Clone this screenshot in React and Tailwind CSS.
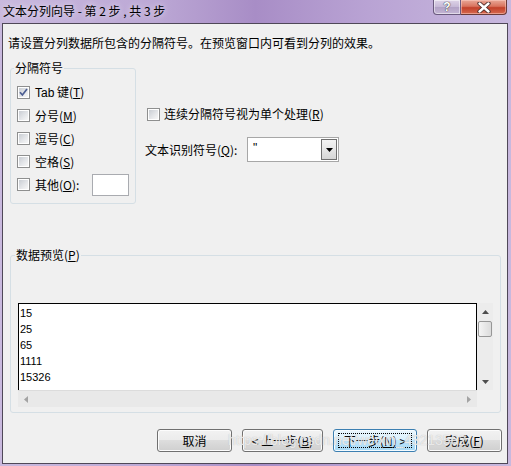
import React from "react";

const lines = ["15", "25", "65", "1111", "15326"];

function Check({ checked }) {
  return (
    <span className="flex h-[13px] w-[13px] shrink-0 items-center justify-center border border-[#8e8f8f] bg-white">
      <span className="flex h-[9px] w-[9px] items-center justify-center bg-[linear-gradient(135deg,#c9cdd3_0%,#e4e6e9_55%,#f7f7f7_100%)]">
        {checked && (
          <svg width="9" height="9" viewBox="0 0 9 9">
            <path d="M1 4.2 L3.4 7 L8 1" fill="none" stroke="#4b5d92" strokeWidth="1.7" />
          </svg>
        )}
      </span>
    </span>
  );
}

function Row({ checked, children, extra }) {
  return (
    <div className="flex h-[23px] items-center">
      <Check checked={checked} />
      <span className="ml-[5px] leading-[14px]">{children}</span>
      {extra}
    </div>
  );
}

function Btn({ children, className, focus }) {
  return (
    <button
      className={
        "flex h-[23px] items-center justify-center rounded-[3px] border text-[12px] leading-[14px] text-black " +
        (focus
          ? "border-[#3c7fb1] bg-[linear-gradient(#eaf6fd_0%,#d9f0fc_50%,#bee6fd_50%,#a7d9f5_100%)] shadow-[inset_0_0_0_1px_#f4fbff] "
          : "border-[#707070] bg-[linear-gradient(#f2f2f2_0%,#ebebeb_50%,#dddddd_50%,#cfcfcf_100%)] shadow-[inset_0_0_0_1px_#fcfcfc] ") +
        className
      }
    >
      {focus ? (
        <span className="flex h-[15px] w-[calc(100%-8px)] items-center justify-center border border-dotted border-black">
          {children}
        </span>
      ) : (
        children
      )}
    </button>
  );
}

function Tri({ dir, color }) {
  const pts = {
    up: "3.5,0 7,4 0,4",
    down: "0,0 7,0 3.5,4",
    left: "4,0 4,7 0,3.5",
    right: "0,0 4,3.5 0,7",
  }[dir];
  const vert = dir === "up" || dir === "down";
  return (
    <svg width={vert ? 7 : 4} height={vert ? 4 : 7} viewBox={vert ? "0 0 7 4" : "0 0 4 7"}>
      <polygon points={pts} fill={color} />
    </svg>
  );
}

export default function App() {
  return (
    <div className="relative flex h-[466px] w-[511px] flex-col overflow-hidden bg-[linear-gradient(90deg,#c9b9de_0%,#bca8d5_30%,#a88dc6_50%,#b9a3d4_72%,#c8b8de_100%)] font-['Noto_Sans_CJK_SC',sans-serif] text-[12px] text-black">
      {/* title bar */}
      <div className="flex h-[23px] shrink-0 items-start justify-between">
        <span className="pl-[3px] pt-[4px] leading-[14px] [text-shadow:0_0_6px_rgba(255,255,255,0.8)]">
          文本分列向导 - 第 2 步 , 共 3 步
        </span>
        <div className="mr-[4px] flex">
          <div className="flex h-[15px] w-[28px] items-center justify-center rounded-bl-[4px] border border-t-0 border-[#6a5a7e] bg-[linear-gradient(#ded4e8_0%,#c6b8d6_50%,#b2a2c6_52%,#c3b5d4_100%)] shadow-[inset_0_0_0_1px_rgba(255,255,255,0.5)]">
            <span className="font-['Liberation_Sans',sans-serif] text-[12px] font-bold leading-[12px] text-white [text-shadow:0_0_1px_#333,0_0_1px_#333]">
              ?
            </span>
          </div>
          <div className="flex h-[15px] w-[46px] items-center justify-center rounded-br-[4px] border border-l-0 border-t-0 border-[#6a3a38] bg-[linear-gradient(#e9a898_0%,#d9735e_45%,#c2402a_55%,#d66a4f_100%)] shadow-[inset_0_0_0_1px_rgba(255,210,200,0.5)]">
            <svg width="14" height="11" viewBox="0 0 14 11">
              <path d="M2.5 1.5 L11.5 9.5 M11.5 1.5 L2.5 9.5" stroke="#4a2a28" strokeWidth="4.2" strokeLinecap="round" />
              <path d="M2.5 1.5 L11.5 9.5 M11.5 1.5 L2.5 9.5" stroke="#ffffff" strokeWidth="2.4" strokeLinecap="round" />
            </svg>
          </div>
        </div>
      </div>

      {/* client area */}
      <div className="mb-[2px] ml-[2px] mr-[3px] flex flex-1 flex-col border border-[#4f4858] bg-[#f0f0f0]">
        <p className="mt-[12px] pl-[5px] leading-[14px]">
          请设置分列数据所包含的分隔符号。在预览窗口内可看到分列的效果。
        </p>

        <div className="mt-[11px] flex">
          <fieldset className="ml-[7px] w-[126px] rounded-[3px] border border-[#d5dfe5] px-[6px] pb-[7px] pt-[6px]">
            <legend className="-ml-[3px] px-[1px] leading-[14px]">分隔符号</legend>
            <Row checked>
              <span className="font-['Liberation_Sans',sans-serif]">Tab</span> 键(<u>T</u>)
            </Row>
            <Row>分号(<u>M</u>)</Row>
            <Row>逗号(<u>C</u>)</Row>
            <Row>空格(<u>S</u>)</Row>
            <Row extra={<span className="ml-auto h-[22px] w-[37px] border border-[#a9abb0] bg-white" />}>
              其他(<u>O</u>):
            </Row>
          </fieldset>

          <div className="ml-[11px] flex flex-col">
            <div className="mt-[46px] flex h-[14px] items-center">
              <Check />
              <span className="ml-[4px] leading-[14px]">连续分隔符号视为单个处理(<u>R</u>)</span>
            </div>
            <div className="-ml-[2px] mt-[16px] flex items-center">
              <span className="w-[102px] leading-[14px]">文本识别符号(<u>Q</u>):</span>
              <div className="flex h-[25px] w-[92px] border border-[#a7a7a7] bg-white p-[1px]">
                <span className="flex-1 pl-[4px] pt-[2px] font-['Liberation_Sans',sans-serif] text-[12px] leading-[14px]">
                  "
                </span>
                <span className="flex w-[16px] items-center justify-center border border-[#707070] bg-[linear-gradient(#f3f3f3_0%,#e6e6e6_50%,#d6d6d6_100%)]">
                  <Tri dir="down" color="#000000" />
                </span>
              </div>
            </div>
          </div>
        </div>

        <fieldset className="ml-[7px] mt-[44px] w-[491px] rounded-[3px] border border-[#d5dfe5] px-[7px] pb-[5px] pt-[41px]">
          <legend className="-ml-[3px] px-[1px] leading-[14px]">数据预览(<u>P</u>)</legend>
          <div className="flex flex-col">
            <div className="flex h-[87px]">
              <div className="flex-1 border-x border-t border-black bg-white pl-[1px] pt-[1px] font-['Liberation_Sans',sans-serif] text-[11px] leading-[16px]">
                {lines.map((l) => (
                  <div key={l}>{l}</div>
                ))}
              </div>
              <div className="flex w-[16px] flex-col bg-[#ececec]">
                <div className="flex h-[17px] items-center justify-center">
                  <Tri dir="up" color="#4d4d4d" />
                </div>
                <div className="mx-[1px] mt-[1px] h-[16px] rounded-[2px] border border-[#979797] bg-[linear-gradient(90deg,#f5f5f5_0%,#e8e8e8_50%,#dcdcdc_100%)]" />
                <div className="flex-1" />
                <div className="flex h-[17px] items-center justify-center">
                  <Tri dir="down" color="#4d4d4d" />
                </div>
              </div>
            </div>
            <div className="flex h-[17px]">
              <div className="flex flex-1 items-center justify-between border-t border-[#dcdcdc] bg-[#e9e9e9] px-[6px]">
                <Tri dir="left" color="#a3a3a3" />
                <Tri dir="right" color="#a3a3a3" />
              </div>
              <div className="w-[16px]" />
            </div>
          </div>
        </fieldset>

        <div className="mt-[16px] flex justify-end gap-[10px] pr-[5px]">
          <Btn className="w-[75px]">取消</Btn>
          <Btn className="w-[81px]">&lt; 上一步(<u>B</u>)</Btn>
          <Btn className="w-[84px]" focus>
            下一步(<u>N</u>) &gt;
          </Btn>
          <Btn className="w-[75px]">完成(<u>F</u>)</Btn>
        </div>
      </div>

      {/* blog watermark */}
      <span className="pointer-events-none absolute left-[228px] top-[432px] font-['Liberation_Sans',sans-serif] text-[14px] leading-[16px] text-white/70 [text-shadow:0_0_1px_#b4b4b4]">
        https://blog.csdn.net/weixin_43213562
      </span>
    </div>
  );
}
